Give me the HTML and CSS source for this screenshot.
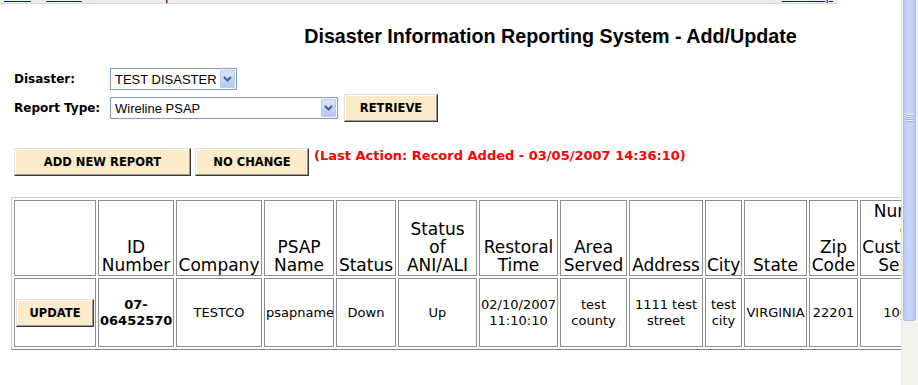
FILE: index.html
```html
<!DOCTYPE html>
<html lang="en">
<head>
    <meta charset="UTF-8">
    <title>Disaster Information Reporting System - Add/Update</title>
    <link rel="stylesheet" href="styles.css">
</head>
<body>
<div class="window">
    <div class="page">
        <!-- breadcrumb strip, scrolled mostly out of view -->
        <div class="crumbs">
            <a href="#">FCC</a><span class="sep">&gt;</span><a href="#">PSHS</a><span class="sep">&gt;</span><span class="here">Disaster Reports</span>
            <a href="#">Site Map</a>
        </div>

        <h1 class="page-title">Disaster Information Reporting System - Add/Update</h1>

        <div class="filters">
            <label class="filter-label" for="disaster">Disaster:</label>
            <div class="select select-short">
                <select id="disaster"><option>TEST DISASTER</option></select>
                <span class="select-arrow"><svg width="9" height="6" viewBox="0 0 9 6"><path d="M1 1 L4.5 4.5 L8 1" fill="none" stroke="#4d6185" stroke-width="2"/></svg></span>
            </div>

            <label class="filter-label" for="report-type">Report Type:</label>
            <div class="filter-line">
                <div class="select select-long">
                    <select id="report-type"><option>Wireline PSAP</option></select>
                    <span class="select-arrow"><svg width="9" height="6" viewBox="0 0 9 6"><path d="M1 1 L4.5 4.5 L8 1" fill="none" stroke="#4d6185" stroke-width="2"/></svg></span>
                </div>
                <button class="btn btn-retrieve">RETRIEVE</button>
            </div>
        </div>

        <div class="actions">
            <button class="btn btn-add">ADD NEW REPORT</button>
            <button class="btn btn-nochange">NO CHANGE</button>
            <span class="last-action">(Last Action: Record Added - 03/05/2007 14:36:10)</span>
        </div>

        <table class="reports">
            <colgroup>
                <col class="c1"><col class="c2"><col class="c3"><col class="c4"><col class="c5">
                <col class="c6"><col class="c7"><col class="c8"><col class="c9"><col class="c10">
                <col class="c11"><col class="c12"><col class="c13">
            </colgroup>
            <tr class="head">
                <th></th>
                <th>ID<br>Number</th>
                <th>Company</th>
                <th>PSAP<br>Name</th>
                <th>Status</th>
                <th>Status<br>of<br>ANI/ALI</th>
                <th>Restoral<br>Time</th>
                <th>Area<br>Served</th>
                <th>Address</th>
                <th>City</th>
                <th>State</th>
                <th>Zip<br>Code</th>
                <th>Number<br>of<br>Customers<br>Served</th>
            </tr>
            <tr class="data">
                <td><button class="btn btn-update">UPDATE</button></td>
                <td class="id">07-<br>06452570</td>
                <td>TESTCO</td>
                <td>psapname</td>
                <td>Down</td>
                <td>Up</td>
                <td>02/10/2007<br>11:10:10</td>
                <td>test<br>county</td>
                <td>1111 test<br>street</td>
                <td>test<br>city</td>
                <td>VIRGINIA</td>
                <td>22201</td>
                <td>100000</td>
            </tr>
        </table>
    </div>

    <div class="scrollbar">
        <div class="thumb"><div class="grip"></div></div>
    </div>
</div>
</body>
</html>
```

FILE: styles.css
```css
body {
    margin: 0;
    font-family: "DejaVu Sans", Verdana, sans-serif;
    background-color: #fff;
    color: #000;
}

.window {
    display: flex;
    height: 385px;
    overflow: hidden;
}

.page {
    flex: none;
    width: 901px;
    overflow: hidden;
}

/* top strip */
.crumbs {
    display: flex;
    align-items: flex-end;
    width: 838px;
    height: 4px;
    box-sizing: border-box;
    padding: 0 5px 0 4px;
    overflow: hidden;
    background-color: #eeeeee;
    border-bottom: 1px solid #d9d9d9;
    font: 13px/15px "Liberation Sans", Arial, sans-serif;
}

.crumbs a {
    color: #0000ff;
}

.crumbs .sep {
    padding: 0 4px;
}

.crumbs .here {
    flex: 1;
}

.page-title {
    margin: 20px 0 0;
    padding-left: 200px;
    text-align: center;
    font: bold 19.7px/24px "Liberation Sans", Arial, sans-serif;
}

/* filters */
.filters {
    display: grid;
    grid-template-columns: 96px auto;
    justify-content: start;
    align-items: center;
    row-gap: 4px;
    margin: 20px 0 0 14px;
}

.filter-label {
    font-size: 12px;
    font-weight: bold;
}

.filter-line {
    display: flex;
    align-items: center;
    gap: 6px;
}

.select {
    display: flex;
    height: 22px;
    box-sizing: border-box;
    padding: 1px;
    border: 1px solid #7f9db9;
    background-color: #fff;
}

.select-short {
    width: 127px;
}

.select-long {
    width: 228px;
}

.select select {
    flex: 1;
    min-width: 0;
    appearance: none;
    border: 0;
    padding: 0 0 0 3px;
    margin: 0;
    background: #fff;
    color: #000;
    font: 13px "Liberation Sans", Arial, sans-serif;
    outline: none;
}

.select-arrow {
    display: flex;
    align-items: center;
    justify-content: center;
    width: 15px;
    box-sizing: border-box;
    border: 1px solid #b9cbf5;
    border-radius: 1px;
    background: linear-gradient(to bottom, #dae5fd, #c2d3fb 60%, #b4c8f6);
}

/* buttons */
.btn {
    height: 28px;
    padding: 0;
    font-family: "DejaVu Sans", Verdana, sans-serif;
    font-size: 11.5px;
    font-weight: bold;
    color: #000;
    background-color: #fcebc9;
    border: 1px solid;
    border-color: #e4e1da #3a3a3a #3a3a3a #e4e1da;
    box-shadow: inset -1px -1px #9c9a94, inset 1px 1px #ffffff;
    cursor: pointer;
}

.btn-retrieve {
    width: 94px;
}

.btn-add {
    width: 177px;
}

.btn-nochange {
    width: 114px;
}

.btn-update {
    width: 78px;
}

.actions {
    display: flex;
    align-items: flex-start;
    gap: 4px;
    margin: 26px 0 0 14px;
}

.last-action {
    margin-left: 1px;
    font-size: 13px;
    font-weight: bold;
    color: #ff0000;
    white-space: nowrap;
}

/* report table */
.reports {
    table-layout: fixed;
    width: 948px;
    margin: 21px 0 0 11px;
    border-collapse: separate;
    border-spacing: 2px;
    border: 1px solid;
    border-color: #d0d0d0 #808080 #808080 #d0d0d0;
}

.reports th,
.reports td {
    padding: 1px;
    border: 1px solid #8e8e8e;
    text-align: center;
    overflow: hidden;
}

.reports th {
    font-size: 17px;
    font-weight: normal;
    line-height: 18px;
    vertical-align: bottom;
    white-space: nowrap;
}

.reports td {
    height: 65px;
    font-size: 13px;
    line-height: 15.5px;
    vertical-align: middle;
}

.reports td.id {
    font-weight: bold;
}

.c1 { width: 82px; }
.c2 { width: 76px; }
.c3 { width: 86px; }
.c4 { width: 70px; }
.c5 { width: 60px; }
.c6 { width: 79px; }
.c7 { width: 79px; }
.c8 { width: 67px; }
.c9 { width: 74px; }
.c10 { width: 37px; }
.c11 { width: 63px; }
.c12 { width: 49px; }
.c13 { width: 96px; }

/* window scrollbar */
.scrollbar {
    flex: none;
    width: 17px;
    box-sizing: border-box;
    padding: 0 2px 0 1px;
    background-color: #f4f3ee;
    border-left: 1px solid #e9e7df;
}

.thumb {
    height: 321px;
    box-sizing: border-box;
    padding-top: 114px;
    border: 1px solid #a9bff0;
    border-top: 0;
    border-radius: 0 0 3px 3px;
    background: linear-gradient(to right, #b6cbf8, #c8d8fd 35%, #c1d3fb 70%, #aec5f3);
}

.grip {
    width: 7px;
    height: 8px;
    margin: 0 auto;
    background: repeating-linear-gradient(to bottom, #eef3fe 0 1px, #8eabef 1px 2px);
}
```
